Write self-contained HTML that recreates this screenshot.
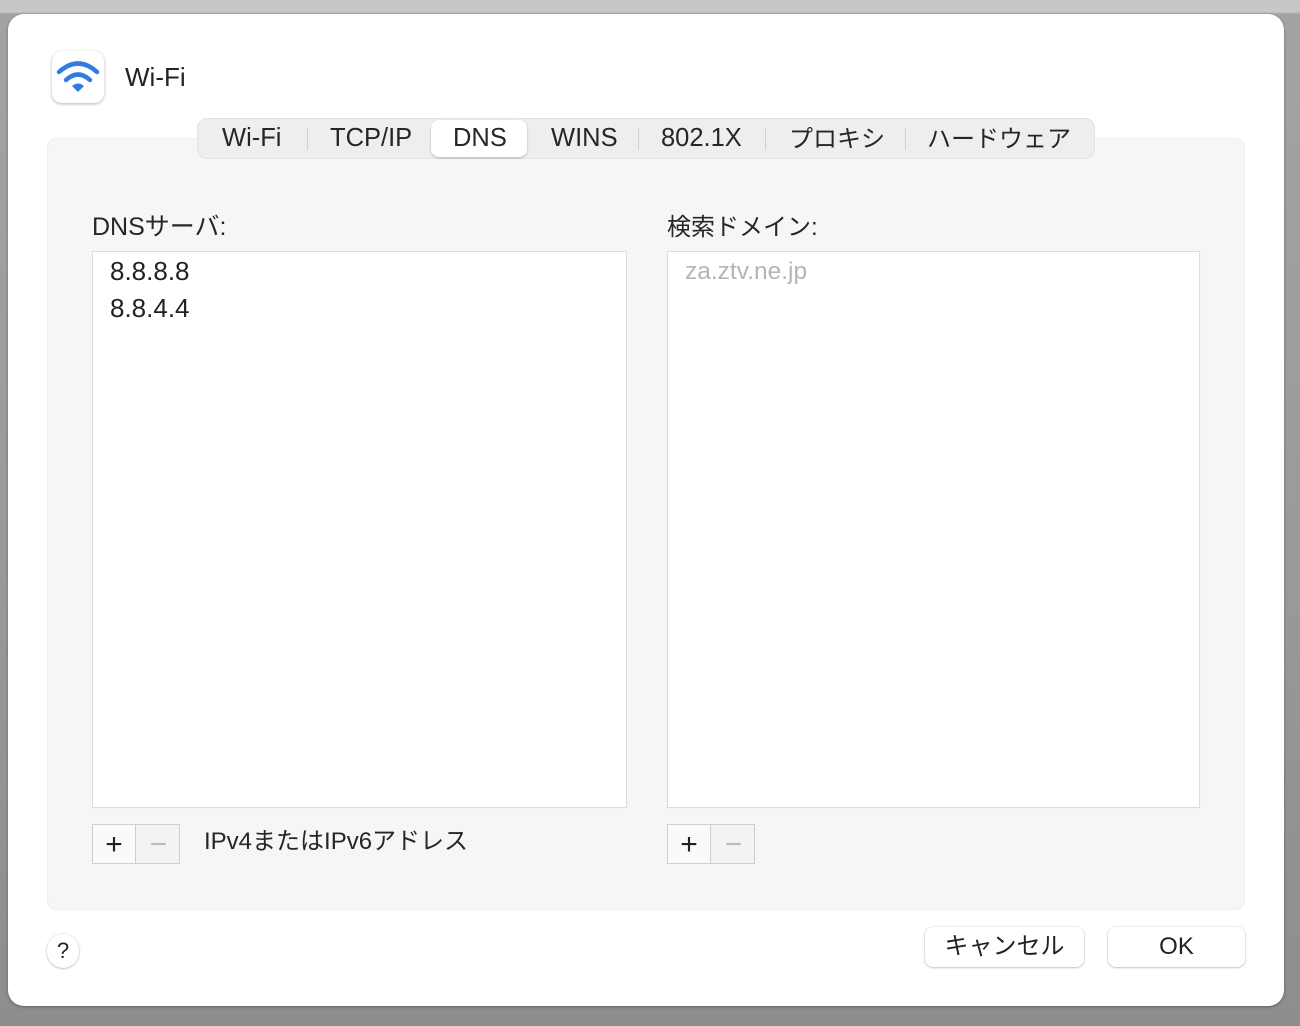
<!DOCTYPE html>
<html><head><meta charset="utf-8"><style>
*{margin:0;padding:0;box-sizing:border-box}
body{width:1300px;height:1026px;overflow:hidden;background:linear-gradient(#c9c6c6 0,#c9c6c6 12px,#a3a3a3 14px,#999 600px,#8d8d8d 1026px);font-family:"Liberation Sans","Noto Sans CJK JP",sans-serif;color:#222;position:relative}
.a{position:absolute}
#win{left:8px;top:14px;width:1276px;height:992px;background:#fff;border-radius:16px;box-shadow:0 1px 3px rgba(0,0,0,.3)}
#panel{left:47px;top:138px;width:1198px;height:772px;background:#f6f6f6;border-radius:10px;border:1px solid #ededed}
#tabs{left:197px;top:118px;width:898px;height:41px;background:#eeeeee;border-radius:10px;border:1px solid #e2e2e2}
.t{font-size:25.5px;top:124px;color:#262626;white-space:nowrap}
.tj{font-size:24px;top:119px;color:#262626;white-space:nowrap}
.sep{top:128px;width:1px;height:22px;background:#d0d0d0}
#sel{left:431px;top:120px;width:96px;height:37px;background:#fff;border-radius:8px;box-shadow:0 1px 2px rgba(0,0,0,.25)}
.box{background:#fff;border:1px solid #dcdcdc;box-shadow:0 0 1px #eee}
.lbl{font-size:24px;color:#262626}
.btn{background:#fff;border-radius:8px;box-shadow:0 0.5px 2px rgba(0,0,0,.35);font-size:24px;text-align:center;line-height:40px;color:#222}
.pm{width:88px;height:40px;border:1px solid #cfcfcf;background:#f3f3f3}
.pm div{position:absolute;top:0;width:43px;height:38px;text-align:center;line-height:40px;font-size:30px}
</style></head><body>
<div id="win" class="a"></div>
<div class="a" style="left:52px;top:51px;width:52px;height:52px;border-radius:10px;background:#fff;box-shadow:0 1px 3px rgba(0,0,0,.3)">
<svg width="52" height="52" viewBox="0 0 52 52"><g fill="none" stroke="#2f7de1" stroke-width="4.5" stroke-linecap="round"><path d="M7 21 Q26 4 45 21"/><path d="M14 29 Q26 18 38 29"/></g><path d="M20 35 Q26 30 32 35 L26 41 Z" fill="#2f7de1"/></svg></div>
<div class="a" style="left:125px;top:62px;font-size:26px;color:#222">Wi-Fi</div>
<div id="panel" class="a"></div>
<div id="tabs" class="a"></div>
<div id="sel" class="a"></div>
<div class="a t" style="left:222px">Wi-Fi</div>
<div class="a sep" style="left:307px"></div>
<div class="a t" style="left:330px">TCP/IP</div>
<div class="a t" style="left:453px">DNS</div>
<div class="a t" style="left:551px">WINS</div>
<div class="a sep" style="left:638px"></div>
<div class="a t" style="left:661px">802.1X</div>
<div class="a sep" style="left:765px"></div>
<div class="a tj" style="left:789px">プロキシ</div>
<div class="a sep" style="left:905px"></div>
<div class="a tj" style="left:927px">ハードウェア</div>
<div class="a lbl" style="left:92px;top:207px;font-size:25px">DNSサーバ:</div>
<div class="a lbl" style="left:667px;top:207px">検索ドメイン:</div>
<div class="a box" style="left:92px;top:251px;width:535px;height:557px"></div>
<div class="a box" style="left:667px;top:251px;width:533px;height:557px"></div>
<div class="a" style="left:110px;top:253px;font-size:26px;line-height:37px;color:#222">8.8.8.8<br>8.8.4.4</div>
<div class="a" style="left:685px;top:258px;font-size:24.5px;color:#b5b5b5">za.ztv.ne.jp</div>
<div class="a pm" style="left:92px;top:824px"><div style="left:0;border-right:1px solid #cfcfcf;background:#fafafa">+</div><div style="left:44px;color:#bbb">−</div></div>
<div class="a pm" style="left:667px;top:824px"><div style="left:0;border-right:1px solid #cfcfcf;background:#fafafa">+</div><div style="left:44px;color:#bbb">−</div></div>
<div class="a" style="left:204px;top:821px;font-size:24px;color:#262626">IPv4またはIPv6アドレス</div>
<div class="a btn" style="left:47px;top:934px;width:32px;height:34px;border-radius:17px;line-height:34px;font-size:22px">?</div>
<div class="a btn" style="left:925px;top:927px;width:159px;height:40px">キャンセル</div>
<div class="a btn" style="left:1108px;top:927px;width:137px;height:40px">OK</div>
</body></html>
